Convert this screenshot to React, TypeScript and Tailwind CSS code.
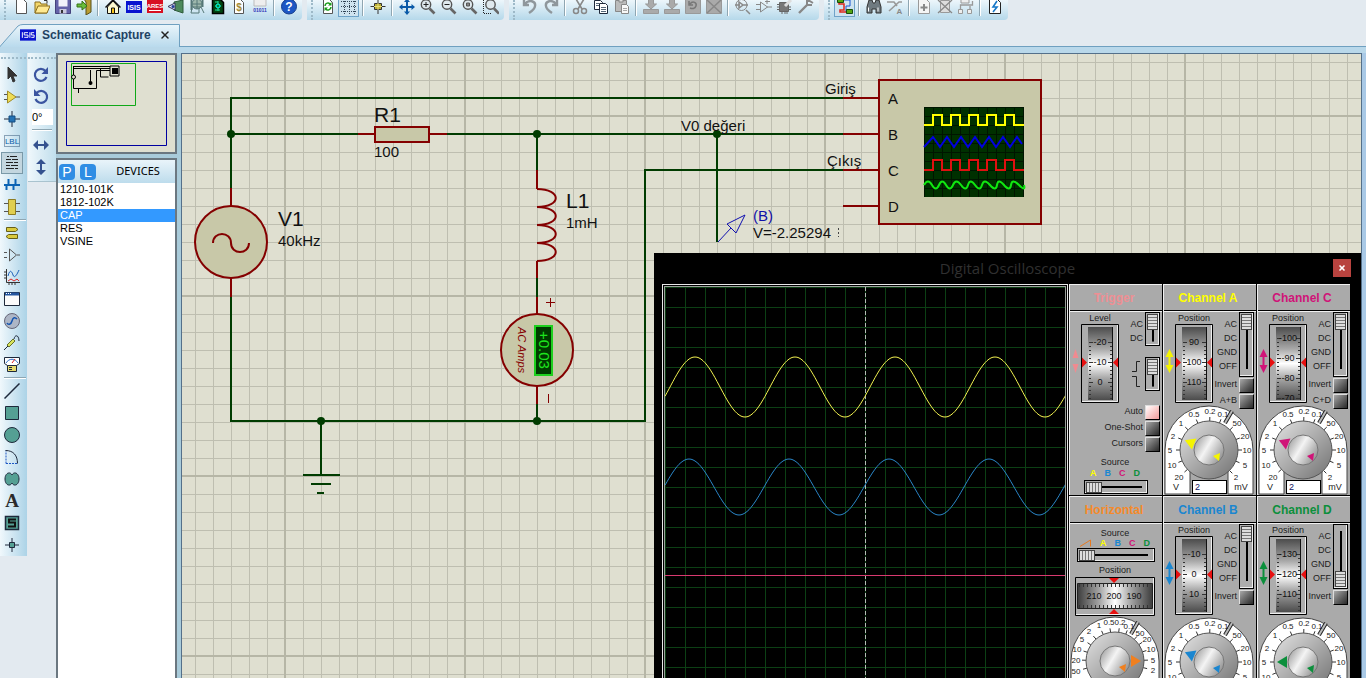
import type { ReactNode } from "react";
import { X } from "lucide-react";
import { clsx } from "clsx";

type IconProps = { children: ReactNode; box?: string };

function Glyph({ children, box = "0 0 16 16" }: IconProps) {
  return (
    <svg viewBox={box} className="size-4 shrink-0 font-['Liberation_Sans',sans-serif]" fill="none" stroke="#1e293b" aria-hidden="true">
      {children}
    </svg>
  );
}

const magnifier = (
  <>
    <path d="M9.5 9.5l5 5" stroke="#666" strokeWidth="2.6" />
    <circle cx="6" cy="5.5" r="4.7" fill="#dfe9ee" stroke="#555" strokeWidth="1.4" />
  </>
);
const page = <path d="M3.5 0.5h6l3 3v11h-9z" fill="#fff" stroke="#555" />;
const arrowBlock = (
  <>
    <path d="M.5 10.500h15v4h-15z" fill="#aaa" stroke="#999" />
    <path d="M5.500 0h5v5h3L8 10 2.500 5h3z" fill="#aaa" stroke="#999" />
  </>
);
const isisLetters = (
  <path d="M2.500 3v6M8.500 3.500h-4v2.500h4v2.500h-4M10.500 3v6M15 3.500h-3v2.500h3v2.500h-3" stroke="#fff" fill="none" />
);

type Tool = { name: string; art: ReactNode; active?: boolean } | null;

const TOOLBARS: Tool[][] = [
  [
    { name: "New", art: <path d="M3.500.5h7l3 3v11h-10z" fill="#fff" stroke="#555" /> },
    {
      name: "Open",
      art: (
        <>
          <path d="M1 3h5l1 2h6v9H1z" fill="#f2d66b" stroke="#8a6d1c" />
          <path d="M4 7h12l-3 7H1z" fill="#ffe991" stroke="#8a6d1c" />
          <path d="M10 1.500h3v3" stroke="#333" />
        </>
      ),
    },
    {
      name: "Save",
      art: (
        <>
          <path d="M.5.5h15v14H.5z" fill="#6462a8" stroke="#44427c" />
          <path d="M3.500.5h9v7h-9z" fill="#f1f1fa" stroke="none" />
          <path d="M4.500 10h7v4.500h-7z" fill="#c9c9dd" stroke="none" />
          <path d="M6 11h2v3H6z" fill="#333" stroke="none" />
        </>
      ),
    },
    {
      name: "Import",
      art: (
        <>
          <path d="M8 0h7v13l-5 3V3z" fill="#b99d33" stroke="#59501c" />
          <path d="M1 5h5V2l5 5-5 4V8H1z" fill="#69bd3a" stroke="#377517" />
        </>
      ),
    },
    null,
    {
      name: "Home",
      art: (
        <>
          <path d="M2.500 8v6.500h11V8L8 2z" fill="#fffbd0" stroke="#111" />
          <path d="M.5 8.500L8 1l7.500 7.500" stroke="#111" strokeWidth="1.500" />
          <path d="M6.500 9h3v5.500h-3z" fill="#f6c419" stroke="#111" />
        </>
      ),
    },
    {
      name: "ISIS",
      art: (
        <>
          <path d="M0 2h16v12H0z" fill="#0913cf" stroke="none" />
          <text x="8" y="11" fontSize="7" fontWeight="bold" textAnchor="middle" fill="#fff" stroke="none">ISIS</text>
        </>
      ),
    },
    {
      name: "ARES",
      art: (
        <>
          <path d="M0 1h16v13H0z" fill="#d81022" stroke="none" />
          <text x="8" y="9" fontSize="6" fontWeight="bold" textAnchor="middle" fill="#fff" stroke="none">ARES</text>
          <path d="M2 11.500h12" stroke="#fff" />
        </>
      ),
    },
    {
      name: "3D Viewer",
      art: (
        <>
          <path d="M6 3l9-2v13l-9-3z" fill="#4d8a5c" stroke="#2d5b3a" />
          <path d="M0 7.500L7 4v7z" fill="#eef" stroke="#335" />
          <circle cx="5" cy="7.500" r="1.500" fill="#24409a" stroke="none" />
        </>
      ),
    },
    {
      name: "Gerber Viewer",
      art: (
        <>
          <path d="M2.500 1v10M13.500 0v8" stroke="#577" strokeWidth="2" />
          <circle cx="8" cy="5" r="5" fill="#9db7ac" stroke="#577" />
          <path d="M3 8h9l3 6M3 9l-1 5h8V9M8 0v10M3 5h10" stroke="#577" />
        </>
      ),
    },
    {
      name: "Design Explorer",
      art: (
        <>
          <path d="M2.500.5h8l3 3v11h-11z" fill="#041" stroke="#000" strokeWidth="1.500" />
          <path d="M5 3h3M5 11h5M8 2v10M5 7h6" stroke="#2d9" />
          <circle cx="8" cy="7" r="2" fill="#083" stroke="#0fe" />
        </>
      ),
    },
    {
      name: "Bill of Materials",
      art: (
        <>
          {page}
          <text x="8" y="11.500" fontSize="10" fontWeight="bold" textAnchor="middle" fill="#a28a35" stroke="none">$</text>
        </>
      ),
    },
    {
      name: "Source Code",
      art: (
        <>
          <path d="M2 0h12v7H2z" fill="#eee" stroke="#bbb" />
          <text x="8" y="12.500" fontSize="5" fontWeight="bold" textAnchor="middle" fill="#3338b8" stroke="none">01011</text>
        </>
      ),
    },
    null,
    {
      name: "Help",
      art: (
        <>
          <circle cx="8" cy="7.500" r="7.500" fill="#1d57c4" stroke="#153e8d" />
          <text x="8" y="12" fontSize="12" fontWeight="bold" textAnchor="middle" fill="#fff" stroke="none">?</text>
        </>
      ),
    },
  ],
  [
    {
      name: "Redraw",
      art: (
        <>
          {page}
          <path d="M5 7c0-3 4-4 5-2M11 8c0 3-4 4-5 2" stroke="#169a16" strokeWidth="1.500" />
          <path d="M11.500 3v3.500H8zM4.500 12V8.500H8z" fill="#169a16" stroke="none" />
        </>
      ),
    },
    {
      name: "Toggle Grid",
      active: true,
      art: <path d="M0 2.500h16M0 7.500h16M0 12.500h16M3.500 0v15M8.500 0v15M13.500 0v15" stroke="#345" strokeDasharray="1 1" />,
    },
    null,
    {
      name: "Origin",
      art: (
        <>
          <path d="M8 0v15M.5 7.500h15" stroke="#333" />
          <path d="M4.500 4.500h7v6h-7z" fill="#b9ad31" stroke="#333" />
          <path d="M8 4v7M4 7.500h8" stroke="#e8df78" />
        </>
      ),
    },
    null,
    {
      name: "Pan",
      art: (
        <>
          <path d="M8 1v14M1 8h14" stroke="#0b5aa8" strokeWidth="2" />
          <path d="M8-.5L11 3H5zM8 16l3-3.500H5zM0 8l3.500-3v6zM16 8l-3.500-3v6z" fill="#0b5aa8" stroke="none" />
        </>
      ),
    },
    { name: "Zoom In", art: <>{magnifier}<path d="M3.500 5.500h5M6 3v5" stroke="#222" /></> },
    { name: "Zoom Out", art: <>{magnifier}<path d="M3.500 5.500h5" stroke="#222" /></> },
    { name: "Zoom All", art: <>{magnifier}<path d="M4.500 4h3v3h-3z" fill="#888" stroke="#555" /></> },
    { name: "Zoom Area", art: <><path d="M.5 1v13.500H9" stroke="#222" strokeDasharray="1 1" /><g transform="translate(1.500)">{magnifier}</g></> },
  ],
  [
    { name: "Undo", art: <path d="M2 1v5h5M3 5c4-5 11-3 10 2 0 3-3 5-6 7" stroke="#8f979c" strokeWidth="2.400" /> },
    { name: "Redo", art: <path d="M14 1v5H9M13 5C9 0 2 2 3 7c0 3 3 5 6 7" stroke="#8f979c" strokeWidth="2.400" /> },
    null,
    {
      name: "Cut",
      art: (
        <>
          <path d="M4 0l6 10M12 0L6 10" stroke="#888" strokeWidth="1.600" />
          <circle cx="4" cy="12" r="2.500" stroke="#888" strokeWidth="1.500" />
          <circle cx="12" cy="12" r="2.500" stroke="#888" strokeWidth="1.500" />
        </>
      ),
    },
    {
      name: "Copy",
      art: (
        <>
          <path d="M1.500 1.500h6l2 2v7h-8z" fill="#fff" />
          <path d="M6.500 4.500h6l2 2v8h-8z" fill="#fff" />
          <path d="M8 8.500h5M8 10.500h5M8 12.500h5M3 4.500h3M3 6.500h3" stroke="#567" />
        </>
      ),
    },
    {
      name: "Paste",
      art: (
        <>
          <path d="M1.500 1.500h11v11h-11z" fill="#bbb" stroke="#888" />
          <path d="M5 0h4v3H5z" fill="#ddd" stroke="#888" />
          <path d="M7.500 5.500h5l2 2v7h-7z" fill="#f8f8f8" stroke="#888" />
          <path d="M9 9.500h4M9 11.500h4" stroke="#aaa" />
        </>
      ),
    },
    null,
    { name: "Block Copy", art: arrowBlock },
    { name: "Block Move", art: arrowBlock },
    { name: "Block Rotate", art: <><path d="M.5.5h15v14H.5z" fill="#aaa" stroke="#999" /><path d="M5 5c3-4 7-1 6 2s-4 3-6 2M4 2v4h4" stroke="#777" strokeWidth="1.500" /></> },
    { name: "Block Delete", art: <><path d="M.5.5h15v14H.5z" fill="#aaa" stroke="#999" /><path d="M1 1l14 13M15 1L1 14" stroke="#888" strokeWidth="1.500" /></> },
    null,
    { name: "Pick Parts", art: <><circle cx="6.500" cy="6" r="5.500" stroke="#888" /><path d="M0 6h5M4 3v6l4-3zM8 6h5M11 11l4 4" stroke="#888" strokeWidth="1.500" /></> },
    { name: "Make Device", art: <path d="M4.500 3v10l7-5zM0 5.500h4M0 10.500h4M11 8h5M11 0v5M9 2.500h5" stroke="#888" /> },
    { name: "Packaging Tool", art: <><path d="M2.500 3.500h9v9h-9z" fill="#777" stroke="#666" /><path d="M0 5.500h2M0 8h2M0 10.500h2M12 8h2M12 10.500h2M5 13v2M8 13v2M10 13v2" stroke="#666" /><path d="M8 7l6-6" stroke="#ddd" strokeWidth="3" /></> },
    { name: "Decompose", art: <><path d="M1 14l9-9" stroke="#888" strokeWidth="2.400" /><path d="M9 1v5h5M10 1l5 3" stroke="#888" strokeWidth="2" /></> },
  ],
  [
    {
      name: "Wire Autorouter",
      active: true,
      art: (
        <>
          <path d="M5 1h8v6H9v6h4" stroke="#1d57d4" />
          <path d="M2 2v3h5v6H3v2h7" stroke="#e02a1c" strokeWidth="1.500" />
          <path d="M.5-.5h6v4h-6zM9.500 10.500h6v4h-6z" fill="#54a512" stroke="#174c0b" />
        </>
      ),
    },
    null,
    { name: "Search and Tag", art: <><path d="M3 1h3l1 3h2l1-3h3l2 7v6h-5v-4H6v4H1V8z" fill="#6f7a80" stroke="#333" /><path d="M2.500 8.500v4M12 8.500v4" stroke="#fff" /></> },
    { name: "Property Assignment", art: <><path d="M0 3h7l3 4M2 12l10-9h3" stroke="#999" strokeWidth="1.600" /><text x="12.500" y="14.500" fontSize="8" fontWeight="bold" textAnchor="middle" fill="#888" stroke="none">A</text></> },
    null,
    { name: "New Sheet", art: <><path d="M2.500.5h8l3 3v11h-11z" fill="#f5f5f5" stroke="#999" /><path d="M8 5v7M4.500 8.500h7" stroke="#888" strokeWidth="2" /></> },
    { name: "Remove Sheet", art: <><path d="M3.500 1.500h9v12h-9z" fill="#ddd" stroke="#999" /><path d="M1 1l14 13M15 1L1 14" stroke="#888" strokeWidth="1.300" /></> },
    { name: "Exit to Parent", art: <><path d="M.5 10.500h4v4h-4zM9.500 10.500h4v4h-4zM3 0h8v4H3z" fill="#eee" stroke="#999" /><path d="M2.500 10V6h12V2M12 10V7" stroke="#999" strokeWidth="1.300" /></> },
    null,
    { name: "Electrical Check", art: <><path d="M2.500.5h8l3 3v11h-11z" fill="#fff" stroke="#222" /><path d="M10 2L6 8h4l-4 5" stroke="#1778c8" strokeWidth="1.600" /></> },
  ],
];

const teal = "#55a094";
const MODES: Tool[] = [
  { name: "Selection", art: <path d="M4 0v12l3-3 2 6 2-1-2-5h4z" fill="#333" stroke="#333" /> },
  { name: "Component", art: <><path d="M0 5.500h4M0 10.500h4M11 8h5" stroke="#555" /><path d="M3.500 2v12L12 8z" fill="#efdc55" stroke="#a08c28" /></> },
  { name: "Junction dot", art: <><path d="M8 0v16M0 8h16" /><path d="M5 5h6v6H5z" fill="#2472b4" stroke="#144c80" /></> },
  { name: "Wire label", art: <><path d="M.5 2.500h15v11H.5z" stroke="#357" strokeDasharray="1 1" /><text x="8" y="11" fontSize="8" textAnchor="middle" fill="#075ba8" stroke="none">LBL</text></> },
  { name: "Text script", active: true, art: <path d="M3 1.500h2m1 0h7M2 4.500h5m1 0h6M2 7.500h7m1 0h4M2 10.500h4m1 0h7M2 13.500h8m1 0h3" stroke="#222" /> },
  { name: "Buses", art: <path d="M0 8h16M4.500 2v6M11.500 2v6M2.500 8v5M9.500 8v5" stroke="#0b63b4" strokeWidth="2" /> },
  { name: "Subcircuit", art: <><path d="M0 4.500h4M0 12.500h4M12 4.500h4M12 12.500h4" stroke="#555" /><path d="M4.500.5h7v15h-7z" fill="#e0cf50" stroke="#8d7d24" /></> },
  null,
  { name: "Terminals", art: <path d="M2.500 2.500h9l2.500 2-2.500 2h-9zM13.500 9.500h-9l-2.500 2 2.500 2h9z" fill="#d9ca3d" stroke="#675f17" /> },
  { name: "Device pins", art: <path d="M5.500 2v12l7-6zM0 5.500h3M0 10.500h3M13 8h3" stroke="#555" /> },
  { name: "Graph", art: <><path d="M2.500 0v13.500H16M0 3h2M0 6h2M0 9h2M5 14v2M8 14v2M11 14v2" stroke="#333" /><path d="M4 7c2-8 4-4 5-1s3 2 6-5" stroke="#185cb8" /><path d="M4 12l3-2 3 2 3-2 2 2" stroke="#d92a2a" /></> },
  { name: "Active popup", art: <><path d="M.5 1.500h15v13H.5z" fill="#fbfbfb" /><path d="M1 3h14" stroke="#2456a0" strokeWidth="3" /><path d="M2 2.500h5" stroke="#fff" strokeDasharray="1 1" /></> },
  { name: "Generator", art: <><circle cx="8" cy="8" r="7.500" fill="#adb6c6" stroke="#667" /><path d="M3 10c1 2 4 2 5-2s3-4 5-2" stroke="#1555b0" strokeWidth="1.500" /></> },
  { name: "Probe", art: <><path d="M0 15l4-4M10 4c1-5 5-4 5 2" /><path d="M3 10l6-6 2 2-6 6z" fill="#d8e35c" stroke="#66702a" /></> },
  { name: "Instruments", art: <><path d="M.5.5h15v6l-3 2h-9l-3-2z" fill="#fff" /><path d="M2 6c3-5 9-5 12 0" stroke="#2a6dc8" /><path d="M8 6l3-4" stroke="#d22" /><path d="M3.500 8.500h9v6h-9z" fill="#e5d96c" /><path d="M5 10.500h3M5 12.500h3" /></> },
  null,
  { name: "Line", art: <path d="M.5 15.500l15-15" strokeWidth="1.500" /> },
  { name: "Box", art: <path d="M1.500 1.500h13v13h-13z" fill={teal} /> },
  { name: "Circle", art: <circle cx="8" cy="8" r="7.500" fill={teal} /> },
  { name: "Arc", art: <><path d="M2 14.500V1.500M2 14.500h12" stroke="#1d57c4" strokeDasharray="2 1" /><path d="M1.500 1.500c8 0 12 5 12 13" /></> },
  { name: "Closed path", art: <path d="M8 4c2-4 7-2 7 4s-5 8-7 4c-2 4-7 2-7-4s5-8 7-4z" fill={teal} /> },
  { name: "Text", art: <text x="8" y="14" fontSize="19" fontWeight="bold" textAnchor="middle" fill="#2b2b2b" stroke="none" className="font-['Liberation_Serif',serif]">A</text> },
  { name: "Symbol", art: <><path d="M1.500 1.500h13v13h-13z" fill={teal} strokeWidth="1.500" /><path d="M12 4.500H5v3h6v4H4" stroke="#111" strokeWidth="2" /></> },
  { name: "Marker", art: <><path d="M8 1v14M1 8h14" /><path d="M5.500 5.500h5v5h-5z" fill={teal} /></> },
];

const DEVICES = ["1210-101K", "1812-102K", "CAP", "RES", "VSINE"];

function TopToolbar() {
  return (
    <header className="flex h-5 gap-[5px] overflow-hidden">
      {TOOLBARS.map((tools, i) => (
        <div key={i} className="flex items-end rounded-br-sm bg-linear-to-b from-[#edf6fb] to-[#b5d8ea] pr-[3px]">
          <span className="mx-1 h-full border-l-2 border-dotted border-[#9db9c8]" />
          {tools.map((tool, j) =>
            tool ? (
              <button
                key={j}
                aria-label={tool.name}
                className={clsx(
                  "mb-[3px] flex h-[21px] w-[21px] items-center justify-center",
                  tool.active && "border border-[#6fa3c8] bg-[#cfe3ef]",
                )}
              >
                <Glyph>{tool.art}</Glyph>
              </button>
            ) : (
              <span key={j} className="mx-[3px] mb-1 h-4 w-[2px] border-l border-[#8fa6b2] bg-white" />
            ),
          )}
        </div>
      ))}
    </header>
  );
}

function TabStrip() {
  return (
    <div className="relative h-[27px] border-b border-[#6fa0c0]">
      <svg className="absolute left-0 top-1 h-[23px] w-[181px]" aria-hidden="true">
        <defs>
          <linearGradient id="tab" x2="0" y2="1">
            <stop stopColor="#eaf5fb" />
            <stop offset="1" stopColor="#b7d9ec" />
          </linearGradient>
        </defs>
        <path d="M0 22.500L18 2Q20 .5 23 .5H179.500V24H0z" fill="url(#tab)" stroke="#6fa0c0" />
      </svg>
      <div className="relative flex h-full items-center pl-5 pt-1">
        <button className="flex items-center gap-[6px] text-xs font-bold text-[#1f4263]">
          <svg viewBox="0 0 17 12" className="h-3 w-4" aria-hidden="true">
            <path d="M0 0h17v12H0z" fill="#0913cf" />
            {isisLetters}
          </svg>
          Schematic Capture
        </button>
        <button aria-label="Close tab" className="ml-2">
          <X className="size-3 text-[#222]" strokeWidth={3} />
        </button>
      </div>
    </div>
  );
}

function ModeBar() {
  return (
    <nav className="w-[27px] self-start bg-linear-to-r from-[#f0f8fc] to-[#acd3e7] px-[1px] pt-1">
      <div className="mb-[5px] h-[2px] border-t-2 border-dotted border-[#9db9c8]" />
      {MODES.map((mode, i) =>
        mode ? (
          <button
            key={i}
            aria-label={mode.name}
            className={clsx("flex h-[22px] w-[22px] items-center justify-center", mode.active && "border border-[#7a99a8] bg-[#c3d6df]")}
          >
            <Glyph>{mode.art}</Glyph>
          </button>
        ) : (
          <div key={i} className="my-px ml-[3px] h-[2px] border-t border-[#8fa6b2] bg-white" />
        ),
      )}
    </nav>
  );
}

function RotateBar() {
  return (
    <nav className="ml-px w-7 self-start border-b border-[#a9c3cf] bg-linear-to-r from-[#f0f8fc] to-[#c0deec] pt-1">
      <div className="mb-[5px] h-[2px] border-t-2 border-dotted border-[#9db9c8]" />
      <button aria-label="Rotate clockwise" className="flex h-[22px] w-[26px] items-center justify-center">
        <Glyph><path d="M12.500 4a6 6 0 1 0 1 6" stroke="#3b55a0" strokeWidth="2.200" /><path d="M15 0v7H8.500z" fill="#3b55a0" stroke="none" /></Glyph>
      </button>
      <button aria-label="Rotate anticlockwise" className="flex h-[22px] w-[26px] items-center justify-center">
        <Glyph><path d="M3.500 4a6 6 0 1 1-1 6" stroke="#3b55a0" strokeWidth="2.200" /><path d="M1 0v7h6.500z" fill="#3b55a0" stroke="none" /></Glyph>
      </button>
      <input aria-label="Rotation angle" defaultValue="0°" className="ml-1 mt-px block h-4 w-[21px] bg-white text-[11px] text-black" />
      <div className="mb-[3px] ml-1 mt-1 h-[2px] w-5 border-t border-[#8fa6b2] bg-white" />
      <button aria-label="Mirror horizontally" className="flex h-[22px] w-[26px] items-center justify-center">
        <Glyph><path d="M3 8h10" stroke="#35528f" strokeWidth="2" /><path d="M0 8l5-5v10zM16 8l-5-5v10z" fill="#35528f" stroke="none" /></Glyph>
      </button>
      <button aria-label="Mirror vertically" className="mb-[3px] flex h-[22px] w-[26px] items-center justify-center">
        <Glyph><path d="M8 3v10" stroke="#35528f" strokeWidth="2" /><path d="M8 0l5 5H3zM8 16l5-5H3z" fill="#35528f" stroke="none" /></Glyph>
      </button>
    </nav>
  );
}

function SidePanel() {
  return (
    <aside className="flex w-[125px] flex-col bg-[#a9cbda] pr-1">
      <div className="border-2 border-[#6b7780] bg-[#dfdfd0]">
        <svg className="block h-[97px] w-[115px]" aria-label="Sheet overview">
          <path d="M8.500 6.500h100v84h-100z" fill="none" stroke="#0000a0" />
          <path d="M13.500 8.500h64v42h-64z" fill="none" stroke="#10a818" />
          <path d="M15.500 11.500h38M15.500 13.500h38M15.500 11v22.500h23v-18h15M32.500 15v15M42.500 14v8h8M20.500 34v4" fill="none" stroke="#000" />
          <circle cx="32.500" cy="28" r="2" fill="#000" />
          <circle cx="15.500" cy="22" r="2" fill="#dfdfd0" stroke="#000" />
          <path d="M52 11h9v10h-9z" fill="#dfdfd0" stroke="#000" />
          <path d="M54 13h6v6h-6z" />
        </svg>
      </div>
      <div className="mt-1 flex flex-1 flex-col border-2 border-b-0 border-[#6b7780] bg-white">
        <div className="flex h-[23px] items-center gap-[5px] bg-linear-to-b from-[#e9f4fa] to-[#bddcec] pl-px text-xs text-black">
          <button aria-label="Pick devices" className="size-4 rounded bg-[#2f8de4] text-sm leading-4 text-white">P</button>
          <button aria-label="Library manager" className="size-4 rounded bg-[#2f8de4] text-sm leading-4 text-white">L</button>
          <h2 className="flex-1 text-center font-['Noto_Sans',sans-serif] text-[11px]">DEVICES</h2>
        </div>
        <ul className="text-[11px] leading-[13px] text-black">
          {DEVICES.map((d) => (
            <li key={d}>
              <button className={clsx("block w-full pl-[2px] text-left", d === "CAP" && "bg-[#3399ff] text-white")}>{d}</button>
            </li>
          ))}
        </ul>
      </div>
    </aside>
  );
}

const square = "h9v-10h9v10h9v-10h9v10h9v-10h9v10h9v-10h9v10h9v-10h9v10h10";

function Schematic() {
  return (
    <svg className="block size-full" aria-label="Schematic sheet">
      <defs>
        <pattern id="minor" width="18" height="18" patternUnits="userSpaceOnUse" x="285" y="116">
          <path d="M.5 0v18M0 .5h18" stroke="#bebeb0" />
        </pattern>
        <pattern id="major" width="180" height="180" patternUnits="userSpaceOnUse" x="284" y="115">
          <path d="M1 0v180M0 1h180" stroke="#b6b6a6" strokeWidth="2" />
        </pattern>
        <pattern id="cells" width="9" height="9" patternUnits="userSpaceOnUse" x="924" y="107">
          <path d="M.5 0v9M0 .5h9" stroke="#001500" />
        </pattern>
      </defs>
      {/* sheet coordinates start at 182,54 */}
      <g transform="translate(-182 -54)" fill="none" strokeWidth="2">
        <rect x="182" y="54" width="3000" height="2000" fill="url(#minor)" />
        <rect x="182" y="54" width="3000" height="2000" fill="url(#major)" />

        <g stroke="#003c00">
          <path d="M231 188V98h612M231 134h127M447 134h396M537 134v36M537 278v19M537 404v17M717 134v108" />
          <path d="M231 297v124h414V170h198M321 421v53" />
        </g>

        <g stroke="#840000">
          <path d="M843 98h36M843 134h36M843 170h36M843 206h36" />
          <path d="M358 134h16M429 134h18M231 188v18M231 278v19M537 170v19M537 261v17M537 297v18M537 386v18" />
          <rect x="375" y="127" width="54" height="15" fill="#c8c8a8" />
          <circle cx="231" cy="242" r="36" fill="#c8c8a8" />
          <path d="M213 243c0-12 18-12 18 0s18 12 18 0" />
          <path d="M537 189c25 0 25 18 0 18c25 0 25 18 0 18c25 0 25 18 0 18c25 0 25 18 0 18" />
          <circle cx="537" cy="350" r="36" fill="#c8c8a8" />
          <path d="M546 302.500h9M550.500 298v9M548.500 394v9" strokeWidth="1" />
          <rect x="879" y="80" width="162" height="144" fill="#c8c8a8" />
        </g>

        <g stroke="#003c00">
          <path d="M303 475h37M311 484h20M317 493h7" />
        </g>
        <g fill="#003c00">
          <circle cx="231" cy="134" r="4" />
          <circle cx="537" cy="134" r="4" />
          <circle cx="717" cy="134" r="4" />
          <circle cx="321" cy="421" r="4" />
          <circle cx="537" cy="421" r="4" />
        </g>

        <rect x="535" y="326" width="17" height="49" fill="#003c00" stroke="#1ed01e" />
        <text transform="translate(539 331) rotate(90)" fontSize="15" fill="#1ee61e">+0.03</text>
        <text transform="translate(518 327) rotate(90)" fontSize="11" fontStyle="italic" fill="#840000">AC Amps</text>

        <rect x="924" y="107" width="100" height="90" fill="#003000" />
        <rect x="924" y="107" width="100" height="90" fill="url(#cells)" />
        <path d={"M924 125" + square} stroke="#ff0" />
        <path d="M924 147l9-10 7 10 7-10 7 10 7-10 7 10 7-10 7 10 7-10 7 10 7-10 7 10 7-10 5 7" stroke="#0000e0" />
        <path d={"M924 170" + square} stroke="#e01010" />
        <path d="M924 185q4-7 8 0t7 0 7 0 7 0 8 0 7 0 7 0 7 0 8 0 7 0 7 0 7 0 8 0 5 0" stroke="#10e810" />

        <path d="M718 242l13-14M727 224l18-9-9 18z" stroke="#1010b0" strokeWidth="1" />
        <path d="M838.500 228v9" stroke="#444" strokeWidth="1" strokeDasharray="2 2" />

        <g fill="#111" fontSize="15">
          <text x="374" y="122" fontSize="21">R1</text>
          <text x="374" y="157">100</text>
          <text x="278" y="226" fontSize="21">V1</text>
          <text x="278" y="246">40kHz</text>
          <text x="566" y="208" fontSize="21">L1</text>
          <text x="566" y="228">1mH</text>
          <text x="825" y="94">Giriş</text>
          <text x="681" y="131">V0 değeri</text>
          <text x="827" y="166">Çıkış</text>
          <text x="753" y="221" fill="#1010a8">(B)</text>
          <text x="753" y="238">V=-2.25294</text>
          <text x="888" y="104">A</text>
          <text x="888" y="140">B</text>
          <text x="888" y="176">C</text>
          <text x="888" y="212">D</text>
        </g>
      </g>
    </svg>
  );
}

function sine(mid: number, amp: number, peak: number) {
  const pts: string[] = [];
  for (let x = 0; x <= 404; x += 2) {
    pts.push(`${x},${(mid - amp * Math.cos(((x - peak) / 100) * 2 * Math.PI)).toFixed(1)}`);
  }
  return pts.join(" ");
}

function Display() {
  return (
    <div className="flex-1 border border-b-0 border-[#e8e8e8] p-px pb-0">
      <div className="h-full border border-b-0 border-[#9a9f9a]">
        <svg className="block size-full" aria-label="Traces">
          <defs>
            <pattern id="div" width="20" height="20" patternUnits="userSpaceOnUse">
              <path d="M.5 0v20M0 .5h20" stroke="#0c3f14" />
            </pattern>
          </defs>
          <rect width="100%" height="100%" fill="url(#div)" />
          <path d="M200.500 0v2000" stroke="#b4bcb4" strokeDasharray="4 2" />
          <g fill="none">
            <polyline points={sine(100, 30, 30)} stroke="#f2f250" />
            <polyline points={sine(200, 28, 24)} stroke="#2a86c8" />
          </g>
          <rect y="288" width="100%" height="1" fill="#d83a70" />
        </svg>
      </div>
    </div>
  );
}

type WheelProps = { values: string[]; shift?: number };

function Wheel({ values, shift = 0 }: WheelProps) {
  return (
    <svg className="block h-[79px] w-[38px] overflow-hidden" aria-hidden="true">
      <defs>
        <linearGradient id="roll" x2="0" y2="1">
          <stop stopColor="#4c4c4c" />
          <stop offset=".3" stopColor="#a8a8a8" />
          <stop offset=".5" stopColor="#fff" />
          <stop offset=".7" stopColor="#a8a8a8" />
          <stop offset="1" stopColor="#4c4c4c" />
        </linearGradient>
        <clipPath id="rollClip"><path d="M6 3h26v73H6z" /></clipPath>
      </defs>
      <path d="M.5.5h37v78H.5z" fill="#adadad" stroke="#000" />
      <path d="M1 77.500h35.500V1" fill="none" stroke="#eee" />
      <path d="M7 3h25v73H7z" fill="url(#roll)" />
      <path d="M31.500 3v73" stroke="#111" />
      <g clipPath="url(#rollClip)" fontSize="9" fill="#111" textAnchor="middle">
        {values.map((v, i) => {
          const y = 18 + shift + i * 20;
          return (
            <g key={v}>
              <path d={`M8 ${y + 0.5}h4M27 ${y + 0.5}h4M8 ${y + 4.5}h2M29 ${y + 4.5}h2M8 ${y + 8.5}h2M29 ${y + 8.5}h2M8 ${y + 12.5}h2M29 ${y + 12.5}h2M8 ${y + 16.5}h2M29 ${y + 16.5}h2`} stroke="#333" />
              <text x="19" y={y + 3}>{v}</text>
            </g>
          );
        })}
      </g>
      <path d="M1 33.500v10l5-5zM37 33.500v10l-5-5z" fill="#e81010" />
    </svg>
  );
}

const CHANNEL_MARKS: [string, number, number][] = [
  ["20", -30, 27], ["10", -37, 15], ["5", -39, 0], ["2", -36, -14], ["1", -28, -27], ["0.5", -15, -36], ["0.2", 1, -39],
  ["0.1", 14, -36], ["50", 28, -27], ["20", 36, -14], ["10", 38, 0], ["5", 36, 15], ["2", 27, 27],
];
const TIME_MARKS: [string, number, number][] = [
  ["50", -39, 10], ["20", -39, -1], ["10", -38, -12], ["5", -33, -22], ["2", -26, -30], ["1", -16, -36], ["0.5", -6, -39],
  ["0.2", 5, -39], ["0.1", 14, -35], ["50", 25, -28], ["20", 32, -22], ["10", 36, -12], ["5", 38, -1], ["2", 38, 9],
];

type DialProps = { color: string; angle: number; marks?: [string, number, number][]; units?: [string, string]; label: string };

function Dial({ color, angle, marks = CHANNEL_MARKS, units = ["V", "mV"], label }: DialProps) {
  return (
    <div className="relative mx-auto h-[90px] w-[90px]">
      <svg viewBox="-45 -45 90 90" className="block size-full" aria-hidden="true">
        <defs>
          <linearGradient id="knob" x2="1" y2="1">
            <stop stopColor="#e4e4e4" />
            <stop offset="1" stopColor="#707070" />
          </linearGradient>
          <linearGradient id="cap" x2="1" y2=".6">
            <stop stopColor="#8c8c8c" />
            <stop offset=".5" stopColor="#f4f4f4" />
            <stop offset="1" stopColor="#999" />
          </linearGradient>
        </defs>
        <path d="M-44 44V0A44 44 0 0 1 44 0V44H19V15H-19V44z" fill="#fff" stroke="#444" />
        <path d="M16-27l7-12" stroke="#222" strokeWidth="4" />
        <path d="M16-27l7-12" stroke="#bbb" strokeWidth="2" />
        {marks.map(([, x, y], i) => {
          const r = Math.hypot(x, y);
          return <path key={i} d={`M${(x / r) * 29} ${(y / r) * 29}L${(x / r) * 33} ${(y / r) * 33}`} stroke="#333" />;
        })}
        <circle r="29" fill="url(#knob)" stroke="#555" />
        <circle r="15" fill="url(#cap)" stroke="#777" />
        <path d="M-26 0l10-6v12z" fill={color} transform={`rotate(${angle})`} />
        <path d="M4 6l7-3-1 8z" fill={color} />
        <g fontSize="8" fill="#222" textAnchor="middle">
          {marks.map(([t, x, y], i) => (
            <text key={i} x={x} y={y + 3}>{t}</text>
          ))}
          <text x="-33" y="40" fontSize="9">{units[0]}</text>
          <text x="32" y="40" fontSize="9">{units[1]}</text>
        </g>
      </svg>
      <input
        aria-label={label}
        defaultValue="2"
        className="absolute bottom-[1px] left-7 h-[14px] w-[35px] border border-black bg-white pl-[2px] text-[9px] text-[#101060]"
      />
    </div>
  );
}

type SlideProps = { label: string; max: number; value?: number; className?: string };

function VSlide({ label, max, value = 0, className }: SlideProps) {
  return (
    <input
      type="range"
      aria-label={label}
      max={max}
      defaultValue={value}
      className={clsx(
        "block w-[15px] appearance-none border border-black bg-[#adadad] bg-[linear-gradient(#000,#000)] bg-size-[2px_80%] bg-center bg-no-repeat p-px shadow-[inset_-1px_-1px_0_#eee] [writing-mode:vertical-lr] [&::-webkit-slider-thumb]:h-4 [&::-webkit-slider-thumb]:w-[11px] [&::-webkit-slider-thumb]:appearance-none [&::-webkit-slider-thumb]:border [&::-webkit-slider-thumb]:border-[#444] [&::-webkit-slider-thumb]:bg-[repeating-linear-gradient(#ddd_0_2px,#777_2px_3px)]",
        className,
      )}
    />
  );
}

function HSlide({ label, max, value = 0, className }: SlideProps) {
  return (
    <input
      type="range"
      aria-label={label}
      max={max}
      defaultValue={value}
      className={clsx(
        "block h-[14px] appearance-none border border-black bg-[#adadad] bg-[linear-gradient(#000,#000)] bg-size-[86%_2px] bg-center bg-no-repeat p-px shadow-[inset_-1px_-1px_0_#eee] [&::-webkit-slider-thumb]:h-[11px] [&::-webkit-slider-thumb]:w-4 [&::-webkit-slider-thumb]:appearance-none [&::-webkit-slider-thumb]:border [&::-webkit-slider-thumb]:border-[#444] [&::-webkit-slider-thumb]:bg-[repeating-linear-gradient(90deg,#ddd_0_2px,#777_2px_3px)]",
        className,
      )}
    />
  );
}

function Push({ label, on }: { label: string; on?: boolean }) {
  return (
    <label className="flex h-4 items-center justify-end gap-[2px] whitespace-nowrap">
      {label}
      <input
        type="checkbox"
        defaultChecked={on}
        className="size-[15px] shrink-0 appearance-none border border-black border-l-[#ddd] border-t-[#ddd] bg-linear-to-br from-[#aaa] to-[#2a2a2a] checked:from-white checked:to-[#f09a9a]"
      />
    </label>
  );
}

function Cell({ title, titleClass, children }: { title: string; titleClass: string; children: ReactNode }) {
  return (
    <section className="h-[211px] shrink-0 border-l border-t border-[#f0f0f0] bg-[#aaaaaa]">
      <h3 className={clsx("h-[26px] border-b border-black pr-1 text-center text-xs font-bold leading-[26px]", titleClass)}>{title}</h3>
      <div className="border-t border-[#f0f0f0] pr-[2px]">{children}</div>
    </section>
  );
}

function UpDown({ color }: { color: string }) {
  return (
    <svg className="mt-[37px] h-6 w-[11px] shrink-0" aria-hidden="true">
      <path d="M5.500 4v16" stroke={color} strokeWidth="2" />
      <path d="M5.500 0l4 8h-8zM5.500 24l4-8h-8z" fill={color} />
    </svg>
  );
}

type ChannelProps = {
  name: string;
  color: string;
  titleClass: string;
  values: string[];
  shift?: number;
  coupling?: number;
  sum?: string;
  angle: number;
};

function Channel({ name, color, titleClass, values, shift, coupling, sum, angle }: ChannelProps) {
  return (
    <Cell title={`Channel ${name}`} titleClass={titleClass}>
      <div className="flex">
        <UpDown color={color} />
        <div className="w-[38px] shrink-0">
          <div className="h-3 text-center leading-3">Position</div>
          <Wheel values={values} shift={shift} />
        </div>
        <div className="flex h-[97px] flex-1 flex-col">
          <div className="flex justify-end gap-[2px]">
            <div className="pt-[5px] text-right leading-[14px]">
              <div>AC</div>
              <div>DC</div>
              <div>GND</div>
              <div>OFF</div>
            </div>
            <VSlide label={`Channel ${name} coupling`} max={3} value={coupling} className="h-[65px]" />
          </div>
          <Push label="Invert" />
          {sum && <Push label={sum} />}
        </div>
      </div>
      <div className="-mt-1">
        <Dial color={color} angle={angle} label={`Channel ${name} volts per division`} />
      </div>
    </Cell>
  );
}

function SourceLetters() {
  return (
    <>
      <span className="text-[#ffff00]">A</span>
      <span className="text-[#1a86d0]">B</span>
      <span className="text-[#d01478]">C</span>
      <span className="text-[#0c8f3c]">D</span>
    </>
  );
}

function Trigger() {
  return (
    <Cell title="Trigger" titleClass="text-[#ee8f94]">
      <div className="flex h-[92px]">
        <svg className="mt-[37px] h-6 w-[11px] shrink-0" aria-hidden="true">
          <path d="M5.500 0l3 9h-6zM5.500 24l3-9h-6z" fill="#f08a90" />
        </svg>
        <div className="w-[38px] shrink-0">
          <div className="h-3 text-center leading-3">Level</div>
          <Wheel values={["-20", "-10", "0"]} />
        </div>
        <div className="flex flex-1 flex-col gap-[11px]">
          <div className="flex justify-end gap-[2px]">
            <div className="pt-[5px] text-right leading-[14px]">
              <div>AC</div>
              <div>DC</div>
            </div>
            <VSlide label="Trigger coupling" max={1} className="h-[34px]" />
          </div>
          <div className="flex justify-end gap-[5px]">
            <svg className="h-[34px] w-2" fill="none" stroke="#222" aria-hidden="true">
              <path d="M0 14.500h4.500v-10H8M0 19.500h4.500v10H8" />
            </svg>
            <VSlide label="Trigger edge" max={1} className="h-[34px]" />
          </div>
        </div>
      </div>
      <Push label="Auto" on />
      <Push label="One-Shot" />
      <Push label="Cursors" />
      <div className="mt-1 text-center leading-3">Source</div>
      <div className="flex justify-center gap-2 font-bold leading-[10px]">
        <SourceLetters />
      </div>
      <HSlide label="Trigger source" max={3} className="ml-[14px] mt-[2px] w-16" />
    </Cell>
  );
}

function Horizontal() {
  return (
    <Cell title="Horizontal" titleClass="text-[#f58a2a]">
      <div className="pt-[3px] text-center leading-3">Source</div>
      <div className="flex items-center justify-center gap-2 font-bold leading-[8px]">
        <svg className="h-2 w-3" aria-hidden="true">
          <path d="M0 7.500L10.500 1v6.500" fill="none" stroke="#e87a20" />
        </svg>
        <SourceLetters />
      </div>
      <HSlide label="Horizontal source" max={4} className="ml-[7px] mt-px w-[78px]" />
      <div className="mt-[2px] text-center leading-[13px]">Position</div>
      <svg className="mx-auto block h-[39px] w-20" aria-hidden="true">
        <defs>
          <linearGradient id="rollX">
            <stop stopColor="#3c3c3c" />
            <stop offset=".3" stopColor="#a8a8a8" />
            <stop offset=".5" stopColor="#fff" />
            <stop offset=".7" stopColor="#a8a8a8" />
            <stop offset="1" stopColor="#3c3c3c" />
          </linearGradient>
        </defs>
        <path d="M.5.5h79v38H.5z" fill="#adadad" stroke="#000" />
        <path d="M1 37.500h77.500V1" fill="none" stroke="#eee" />
        <path d="M2.500 6.500h75v25h-75z" fill="url(#rollX)" stroke="#222" />
        <path d="M4 8.500h72M4 29.500h72" stroke="#333" strokeWidth="3" strokeDasharray="1 3" />
        <g fontSize="9" fill="#111" textAnchor="middle">
          <text x="19" y="22">210</text>
          <text x="39" y="22">200</text>
          <text x="59" y="22">190</text>
        </g>
        <path d="M34 1h10l-5 5zM34 37h10l-5-5z" fill="#e81010" />
      </svg>
      <Dial color="#f08020" angle={180} marks={TIME_MARKS} units={["mS", "µS"]} label="Time per division" />
    </Cell>
  );
}

function Oscilloscope() {
  return (
    <div className="absolute bottom-0 left-[472px] right-0 top-[199px] flex flex-col overflow-hidden bg-black">
      <div className="relative flex h-[31px] shrink-0 items-center justify-center">
        <h2 className="font-['Open_Sans',sans-serif] text-[15px] text-[#303030]">Digital Oscilloscope</h2>
        <button aria-label="Close" className="absolute right-[10px] top-[6px] flex h-[18px] w-[18px] items-center justify-center bg-[#b8433f]">
          <X className="size-2 text-white" strokeWidth={5} />
        </button>
      </div>
      <div className="flex min-h-0 flex-1 pl-2 pr-[11px]">
        <Display />
        <div className="ml-px grid shrink-0 grid-cols-[93px_93px_93px] gap-px text-[9px] text-[#1c1c1c]">
          <div className="flex flex-col gap-px">
            <Trigger />
            <Horizontal />
          </div>
          <div className="flex flex-col gap-px">
            <Channel name="A" color="#f5f500" titleClass="text-[#ffff00]" values={["90", "100", "110"]} sum="A+B" angle={22} />
            <Channel name="B" color="#1a86d0" titleClass="text-[#1a86d0]" values={["-10", "0", "10"]} angle={22} />
          </div>
          <div className="flex flex-col gap-px">
            <Channel name="C" color="#d01478" titleClass="text-[#d01478]" values={["-100", "-90", "-80", "-70"]} shift={-4} sum="C+D" angle={22} />
            <Channel name="D" color="#0c8f3c" titleClass="text-[#0c8f3c]" values={["-130", "-120", "-110"]} coupling={3} angle={0} />
          </div>
        </div>
      </div>
    </div>
  );
}

export default function App() {
  return (
    <div className="flex h-screen flex-col overflow-hidden bg-[#e3eaf0] font-['Liberation_Sans',Arial,sans-serif]">
      <TopToolbar />
      <TabStrip />
      <div className="h-[6px] shrink-0 bg-[#b9d8ea]" />
      <div className="flex min-h-0 flex-1">
        <ModeBar />
        <RotateBar />
        <SidePanel />
        <main className="relative flex-1 border border-b-0 border-[#54708a] bg-[#dfdfd0]">
          <Schematic />
          <Oscilloscope />
        </main>
        <div className="w-1 bg-[#a9c9e6]" />
      </div>
    </div>
  );
}
